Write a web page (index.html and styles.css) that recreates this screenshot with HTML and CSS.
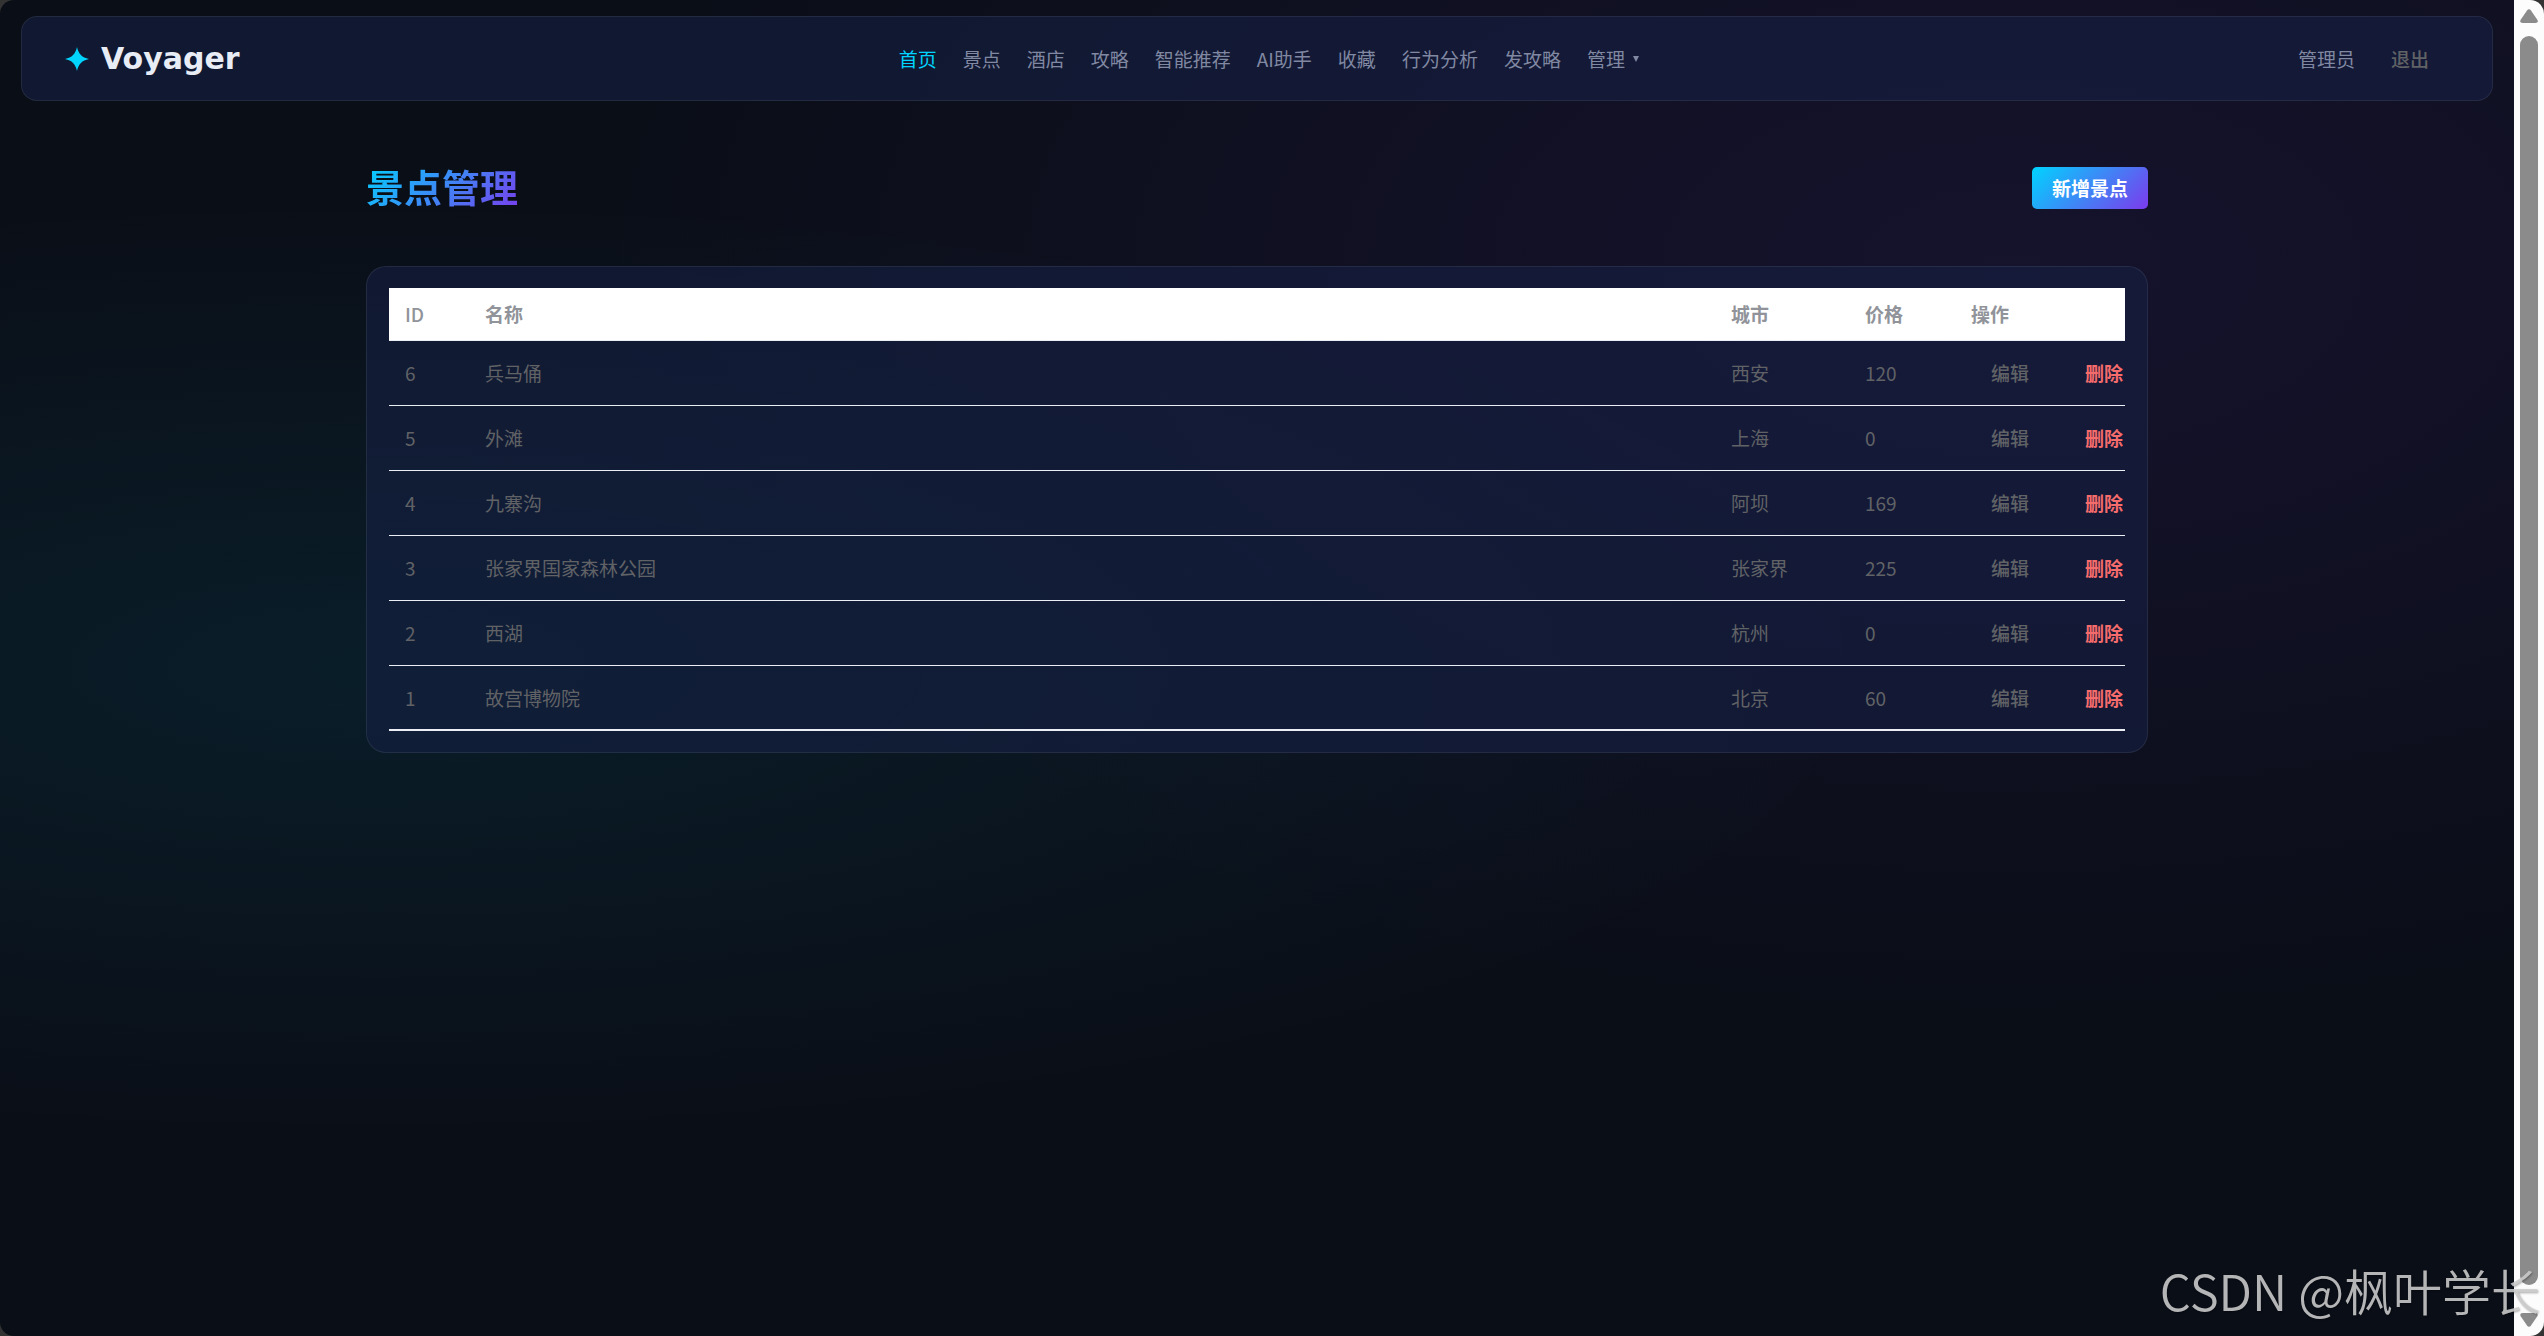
FILE: index.html
```html
<!doctype html>
<html lang="zh-CN">
<head>
    <meta charset="UTF-8">
    <meta name="viewport" content="width=device-width, initial-scale=1.0">
    <title>Voyager - 景点管理</title>
    <link rel="stylesheet" href="styles.css">
</head>
<body>
    <div class="window">
        <div class="page">
            <header class="navbar">
                <a class="brand" href="#">
                    <svg class="brand-icon" viewBox="0 0 24 24"><path d="M12 0C13.5 7 17 10.500 24 12C17 13.500 13.500 17 12 24C10.500 17 7 13.500 0 12C7 10.500 10.500 7 12 0Z"/></svg>
                    <span class="brand-name">Voyager</span>
                </a>
                <nav class="menu">
                    <a class="active" href="#">首页</a>
                    <a href="#">景点</a>
                    <a href="#">酒店</a>
                    <a href="#">攻略</a>
                    <a href="#">智能推荐</a>
                    <a href="#">AI助手</a>
                    <a href="#">收藏</a>
                    <a href="#">行为分析</a>
                    <a href="#">发攻略</a>
                    <button class="dropdown" type="button">管理<svg class="caret" viewBox="0 0 6 6"><path d="M0 0H6L3 6Z"/></svg></button>
                </nav>
                <div class="user">
                    <span class="user-name">管理员</span>
                    <button class="text-btn" type="button">退出</button>
                </div>
            </header>
            <main class="container">
                <div class="page-header">
                    <h1>景点管理</h1>
                    <button class="primary-btn" type="button">新增景点</button>
                </div>
                <section class="card">
                    <table>
                        <thead>
                        <tr>
                            <th class="col-id">ID</th>
                            <th>名称</th>
                            <th class="col-city">城市</th>
                            <th class="col-price">价格</th>
                            <th class="col-action">操作</th>
                        </tr>
                        </thead>
                        <tbody>
                        <tr>
                            <td>6</td><td>兵马俑</td><td>西安</td><td>120</td>
                            <td class="actions"><button class="text-btn" type="button">编辑</button><button class="text-btn danger" type="button">删除</button></td>
                        </tr>
                        <tr>
                            <td>5</td><td>外滩</td><td>上海</td><td>0</td>
                            <td class="actions"><button class="text-btn" type="button">编辑</button><button class="text-btn danger" type="button">删除</button></td>
                        </tr>
                        <tr>
                            <td>4</td><td>九寨沟</td><td>阿坝</td><td>169</td>
                            <td class="actions"><button class="text-btn" type="button">编辑</button><button class="text-btn danger" type="button">删除</button></td>
                        </tr>
                        <tr>
                            <td>3</td><td>张家界国家森林公园</td><td>张家界</td><td>225</td>
                            <td class="actions"><button class="text-btn" type="button">编辑</button><button class="text-btn danger" type="button">删除</button></td>
                        </tr>
                        <tr>
                            <td>2</td><td>西湖</td><td>杭州</td><td>0</td>
                            <td class="actions"><button class="text-btn" type="button">编辑</button><button class="text-btn danger" type="button">删除</button></td>
                        </tr>
                        <tr>
                            <td>1</td><td>故宫博物院</td><td>北京</td><td>60</td>
                            <td class="actions"><button class="text-btn" type="button">编辑</button><button class="text-btn danger" type="button">删除</button></td>
                        </tr>
                        </tbody>
                    </table>
                </section>
            </main>
        </div>
        <div class="scrollbar">
            <svg class="arrow" viewBox="0 0 18 14"><path d="M7 1.500Q9 -1 11 1.500L17.500 11Q18.500 14 15.500 14H2.500Q-.5 14 .5 11Z"/></svg>
            <div class="thumb"></div>
            <svg class="arrow down" viewBox="0 0 18 14"><path d="M7 1.500Q9 -1 11 1.500L17.500 11Q18.500 14 15.500 14H2.500Q-.5 14 .5 11Z"/></svg>
        </div>
    </div>
    <div class="watermark">CSDN @枫叶学长</div>
</body>
</html>
```
FILE: styles.css
```css
* {
    box-sizing: border-box;
}
html, body {
    margin: 0;
    padding: 0;
    background: #333;
}
body {
    font-family: "Noto Sans CJK SC", sans-serif;
    font-size: 19px;
    line-height: 28px;
    color: #606266;
    overflow: hidden;
}
a {
    color: inherit;
    text-decoration: none;
}
button {
    margin: 0;
    padding: 0;
    border: 0;
    background: none;
    color: inherit;
    font: inherit;
    cursor: pointer;
}
.window {
    display: grid;
    grid-template-columns: 1fr 30px;
    min-height: 100vh;
    border-radius: 14px;
    overflow: hidden;
}
.page {
    padding: 16px 21px;
    background:
        radial-gradient(ellipse at 15% 50%, rgba(0, 212, 255, 0.08) 0%, transparent 50%),
        radial-gradient(ellipse at 80% 20%, rgba(124, 58, 237, 0.1) 0%, transparent 50%),
        #0a0e17;
}

/* navbar */
.navbar {
    display: flex;
    align-items: center;
    justify-content: space-between;
    height: 85px;
    padding: 0 43px;
    border: 1px solid rgba(255, 255, 255, 0.08);
    border-radius: 16px;
    background: rgba(22, 32, 66, 0.6);
}
.brand {
    display: flex;
    align-items: center;
    gap: 12px;
}
.brand-icon {
    width: 24px;
    height: 24px;
    fill: #00d4ff;
}
.brand-name {
    font-family: "DejaVu Sans", sans-serif;
    font-size: 30px;
    font-weight: bold;
    color: #e8ecf5;
}
.menu {
    display: flex;
    align-items: center;
    gap: 26px;
    color: #8088a2;
}
.menu .active {
    color: #00d4ff;
}
.dropdown {
    display: flex;
    align-items: center;
    gap: 8px;
}
.caret {
    width: 6px;
    height: 6px;
    fill: currentColor;
}
.user {
    display: flex;
    align-items: center;
    gap: 16px;
}
.user-name {
    color: #8088a2;
}
.text-btn {
    padding: 0 20px;
    font-weight: 500;
}

/* content */
.container {
    max-width: 1782px;
    margin: 0 auto;
    padding-top: 59px;
}
.page-header {
    display: flex;
    align-items: center;
    justify-content: space-between;
    height: 56px;
    margin-bottom: 50px;
}
h1 {
    margin: 0;
    padding-bottom: 4px;
    font-size: 38px;
    font-weight: bold;
    line-height: 52px;
    color: transparent;
    background: linear-gradient(135deg, #00d4ff, #7c3aed);
    -webkit-background-clip: text;
    background-clip: text;
}
.primary-btn {
    height: 42px;
    padding: 0 20px;
    border-radius: 5px;
    font-weight: bold;
    color: #fff;
    background: linear-gradient(135deg, #00d4ff, #7c3aed);
}
.card {
    padding: 21px 22px;
    border: 1px solid rgba(255, 255, 255, 0.08);
    border-radius: 20px;
    background: rgba(22, 32, 66, 0.6);
}
table {
    width: 100%;
    table-layout: fixed;
    border-spacing: 0;
    border-bottom: 1px solid #ebeef5;
}
th, td {
    padding: 0 16px;
    text-align: left;
    border-bottom: 1px solid #ebeef5;
}
th {
    height: 53px;
    font-weight: bold;
    color: #909399;
    background: #fff;
}
td {
    height: 65px;
}
tr:last-child td {
    height: 64px;
}
.col-id {
    width: 80px;
    font-weight: 500;
}
.col-city {
    width: 134px;
}
.col-price {
    width: 106px;
}
.col-action {
    width: 170px;
}
.actions {
    white-space: nowrap;
}
.danger {
    margin-left: 16px;
    font-weight: bold;
    color: #f56c6c;
}

/* scrollbar */
.scrollbar {
    display: flex;
    flex-direction: column;
    align-items: center;
    gap: 13px;
    padding: 9px 6px;
    background: #fcfcfc;
}
.arrow {
    width: 18px;
    height: 14px;
    fill: #8b8b8b;
}
.down {
    transform: rotate(180deg);
}
.thumb {
    flex: 1;
    width: 18px;
    margin-bottom: 15px;
    border-radius: 9px;
    background: #8b8b8b;
}
.watermark {
    position: fixed;
    right: 4px;
    bottom: 16px;
    font-size: 49px;
    font-weight: 350;
    line-height: 60px;
    white-space: nowrap;
    color: rgba(205, 205, 205, 0.88);
    text-shadow: 1px 1px 2px rgba(0, 0, 0, 0.3);
}
```
